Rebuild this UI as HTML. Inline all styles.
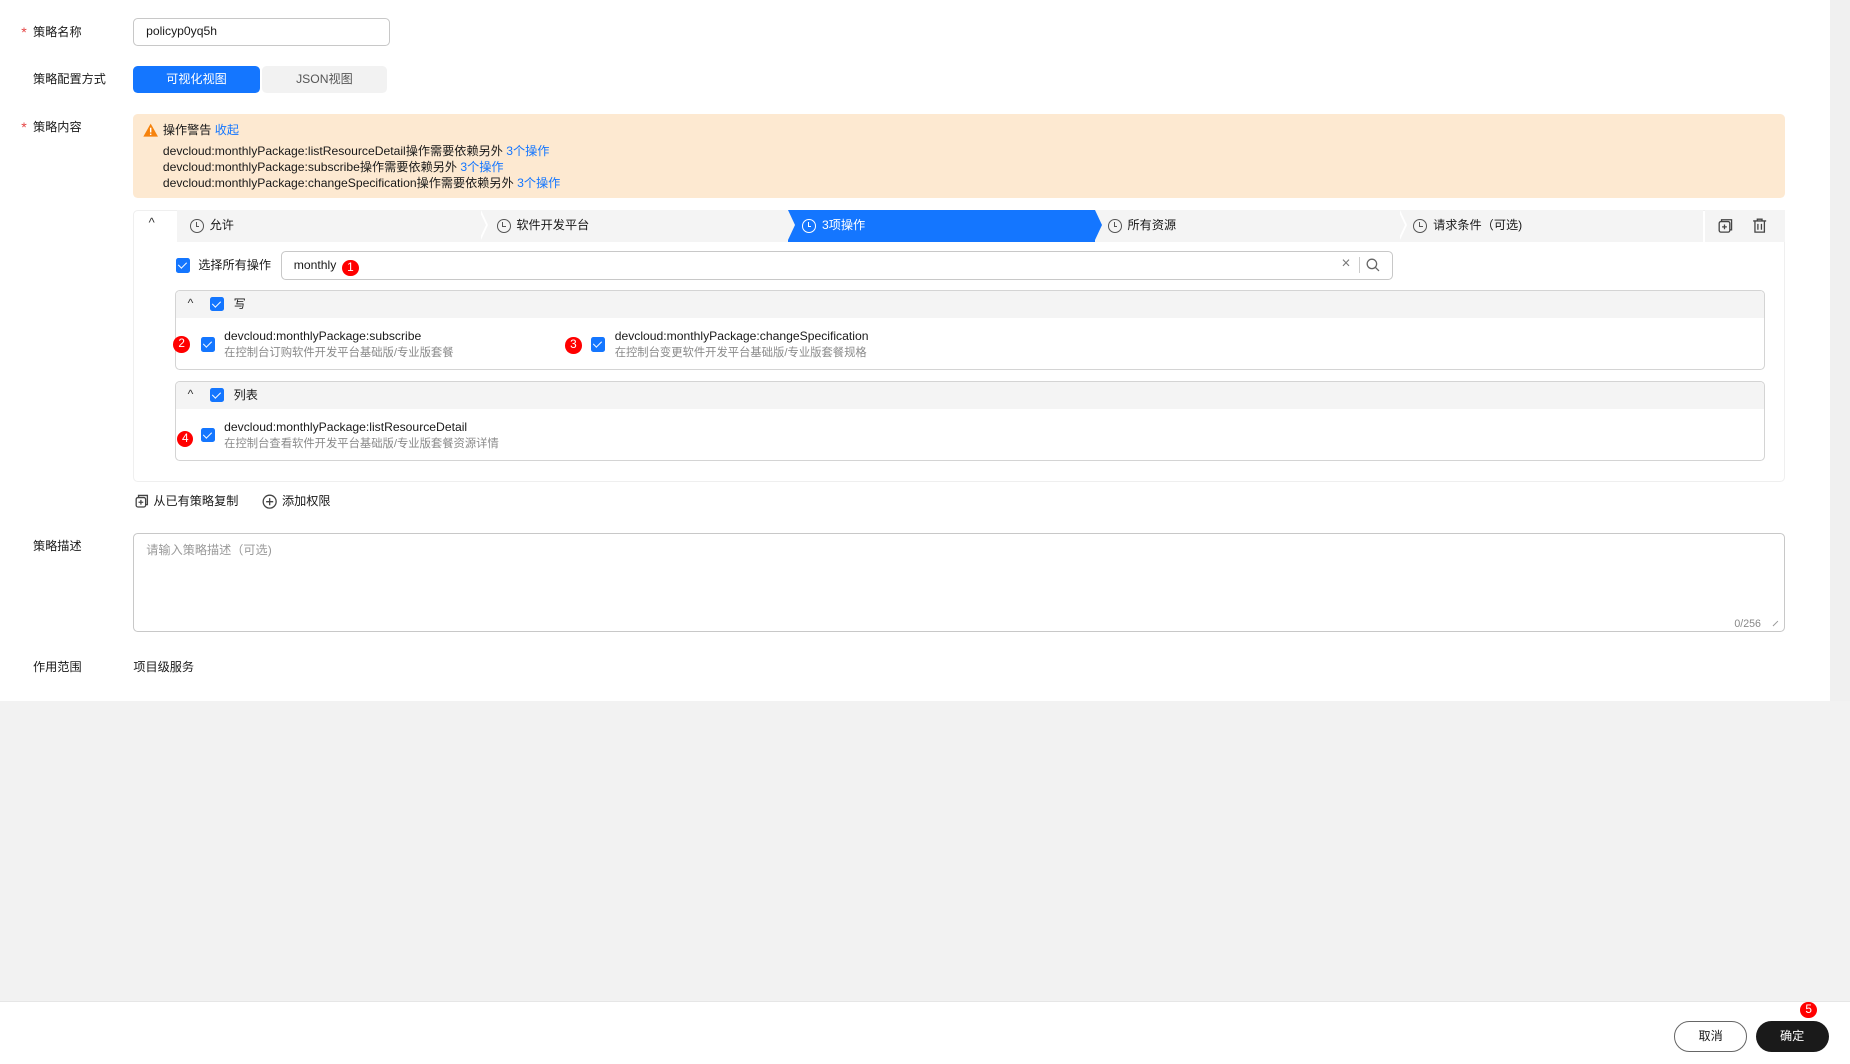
<!DOCTYPE html>
<html><head><meta charset="utf-8"><style>
html,body{margin:0;padding:0;}
body{width:1850px;height:1063px;overflow:hidden;background:#f2f2f2;}
#w{zoom:1.17985;width:1568px;height:901px;position:relative;font-family:"Liberation Sans","Noto Sans CJK SC",sans-serif;font-size:10.3px;line-height:12px;color:#191919;}
.a{position:absolute;}
.lbl{position:absolute;left:28px;color:#191919;}
.st{position:absolute;left:18px;color:#e54545;font-size:12px;}
.cb{position:absolute;width:12px;height:12px;background:#1476ff;border-radius:2px;}
.cb:after{content:"";position:absolute;left:3.5px;top:1.5px;width:3px;height:6px;border:solid #fff;border-width:0 1.5px 1.5px 0;transform:rotate(45deg);}
.badge{position:absolute;width:14px;height:14px;border-radius:50%;background:#f00;color:#fff;font-size:10px;line-height:14px;text-align:center;}
.blue{color:#1476ff}
.step{position:absolute;top:178px;height:27px;background:#f4f4f4;line-height:27px;}
.clk{display:inline-block;width:10px;height:10px;border:1.2px solid #555;border-radius:50%;vertical-align:-3px;margin-right:5px;position:relative}
.clk:after{content:"";position:absolute;left:4px;top:1.5px;width:2px;height:3.5px;border:solid #555;border-width:0 0 1.2px 1.2px}
.clk.w{border-color:#fff}.clk.w:after{border-color:#fff}
.sep{position:absolute;top:178px;width:0;height:0;border-top:13.5px solid transparent;border-bottom:13.5px solid transparent;}
.t2{font-size:9.6px;color:#8a8a8a;}
</style></head><body><div id="w">
<div class="a" style="left:0;top:0;width:1551px;height:594px;background:#fff"></div>
<div class="a" style="left:1551px;top:0;width:17px;height:594px;background:#f0f0f0"></div>
<div class="a" style="left:0;top:848px;width:1568px;height:53px;background:#fff;border-top:1px solid #e6e6e6"></div>

<span class="st" style="top:21px">*</span><span class="lbl" style="top:21px">策略名称</span>
<div class="a" style="left:113px;top:15px;width:206px;height:22px;border:1px solid #c8c8c8;border-radius:4px;line-height:22px;padding-left:10px">policyp0yq5h</div>

<span class="lbl" style="top:61px">策略配置方式</span>
<div class="a" style="left:113px;top:56px;width:107px;height:23px;background:#1476ff;border-radius:4px;color:#fff;text-align:center;line-height:23px">可视化视图</div>
<div class="a" style="left:222px;top:56px;width:106px;height:23px;background:#f2f2f2;border-radius:4px;color:#555;text-align:center;line-height:23px">JSON视图</div>

<span class="st" style="top:102px">*</span><span class="lbl" style="top:102px">策略内容</span>
<div class="a" style="left:113px;top:97px;width:1400px;height:71px;background:#fde9d1;border-radius:4px"></div>
<svg class="a" style="left:121px;top:104px" width="13" height="12"><path d="M6.5 0.5L12.7 11.5H0.3Z" fill="#f6820c"/><rect x="5.9" y="4" width="1.2" height="4" fill="#fff"/><rect x="5.9" y="9" width="1.2" height="1.2" fill="#fff"/></svg>
<div class="a" style="left:138px;top:104px;line-height:13px">操作警告 <span class="blue">收起</span></div>
<div class="a" style="left:138px;top:121px;line-height:13.7px">devcloud:monthlyPackage:listResourceDetail操作需要依赖另外 <span class="blue">3个操作</span><br>devcloud:monthlyPackage:subscribe操作需要依赖另外 <span class="blue">3个操作</span><br>devcloud:monthlyPackage:changeSpecification操作需要依赖另外 <span class="blue">3个操作</span></div>

<div class="a" style="left:113px;top:178px;width:1398px;height:229px;border:1px solid #efefef;border-radius:4px"></div>
<div class="a" style="left:126px;top:183px;font-size:11px;color:#333">^</div>
<div class="step" style="left:150px;width:260px"><span style="margin-left:11px"><i class="clk"></i>允许</span></div>
<div class="step" style="left:410px;width:258px"><span style="margin-left:11px"><i class="clk"></i>软件开发平台</span></div>
<div class="step" style="left:668px;width:260px;background:#1476ff;color:#fff"><span style="margin-left:12px"><i class="clk w"></i>3项操作</span></div>
<div class="step" style="left:928px;width:259px"><span style="margin-left:11px"><i class="clk"></i>所有资源</span></div>
<div class="step" style="left:1187px;width:256px"><span style="margin-left:11px"><i class="clk"></i>请求条件（可选)</span></div>
<div class="step" style="left:1445px;width:68px"></div>
<div class="sep" style="left:408px;border-left:6px solid #fff"></div><div class="sep" style="left:406px;border-left:6px solid #f4f4f4"></div>
<div class="sep" style="left:668px;border-left:6px solid #f4f4f4"></div>
<div class="sep" style="left:928px;border-left:6px solid #1476ff"></div>
<div class="sep" style="left:1187px;border-left:6px solid #fff"></div><div class="sep" style="left:1185px;border-left:6px solid #f4f4f4"></div>
<svg class="a" style="left:1456px;top:185px" width="13" height="13" fill="none" stroke="#444" stroke-width="1.1"><rect x="1" y="3" width="9" height="9" rx="1.5"/><path d="M3 3V1.5h8.5V10H10M5.5 5.5v4M3.5 7.5h4"/></svg>
<svg class="a" style="left:1485px;top:185px" width="13" height="13" fill="none" stroke="#444" stroke-width="1.1"><path d="M1 2.5h11M4.5 2.5V1h4v1.5M2.5 2.5v9.5h8V2.5M5 5v5M8 5v5"/></svg>

<div class="cb" style="left:149px;top:219px"></div>
<div class="a" style="left:168px;top:219px">选择所有操作</div>
<div class="a" style="left:238px;top:213px;width:941px;height:23px;border:1px solid #c8c8c8;border-radius:4px"></div>
<div class="a" style="left:249px;top:219px">monthly</div>
<div class="badge" style="left:290px;top:220px">1</div>
<div class="a" style="left:1137px;top:218px;color:#777;font-size:13px">×</div>
<div class="a" style="left:1152px;top:218px;width:1px;height:13px;background:#ccc"></div>
<svg class="a" style="left:1158px;top:219px" width="12" height="12" fill="none" stroke="#666" stroke-width="1.1"><circle cx="5" cy="5" r="4"/><path d="M8 8l3 3"/></svg>

<div class="a" style="left:148px;top:246px;width:1346px;height:66px;border:1px solid #d4d4d4;border-radius:4px;overflow:hidden"><div style="height:23px;background:#f4f4f4"></div></div>
<div class="a" style="left:159px;top:251px;color:#333">^</div>
<div class="cb" style="left:178px;top:252px"></div><div class="a" style="left:198px;top:252px">写</div>
<div class="badge" style="left:147px;top:285px">2</div>
<div class="cb" style="left:170px;top:286px"></div>
<div class="a" style="left:190px;top:279px">devcloud:monthlyPackage:subscribe</div>
<div class="a t2" style="left:190px;top:293px">在控制台订购软件开发平台基础版/专业版套餐</div>
<div class="badge" style="left:479px;top:286px">3</div>
<div class="cb" style="left:501px;top:286px"></div>
<div class="a" style="left:521px;top:279px">devcloud:monthlyPackage:changeSpecification</div>
<div class="a t2" style="left:521px;top:293px">在控制台变更软件开发平台基础版/专业版套餐规格</div>

<div class="a" style="left:148px;top:323px;width:1346px;height:66px;border:1px solid #d4d4d4;border-radius:4px;overflow:hidden"><div style="height:23px;background:#f4f4f4"></div></div>
<div class="a" style="left:159px;top:328px;color:#333">^</div>
<div class="cb" style="left:178px;top:329px"></div><div class="a" style="left:198px;top:329px">列表</div>
<div class="badge" style="left:150px;top:365px">4</div>
<div class="cb" style="left:170px;top:363px"></div>
<div class="a" style="left:190px;top:356px">devcloud:monthlyPackage:listResourceDetail</div>
<div class="a t2" style="left:190px;top:370px">在控制台查看软件开发平台基础版/专业版套餐资源详情</div>

<svg class="a" style="left:114px;top:419px" width="12" height="12" fill="none" stroke="#444" stroke-width="1.1"><rect x="1" y="3" width="8" height="8" rx="1.5"/><path d="M3 3V1.2h7.5V9H9M5 5v4M3 7h4"/></svg>
<div class="a" style="left:130px;top:419px">从已有策略复制</div>
<svg class="a" style="left:222px;top:419px" width="13" height="13" fill="none" stroke="#444" stroke-width="1.1"><circle cx="6.5" cy="6.5" r="5.5"/><path d="M6.5 3.5v6M3.5 6.5h6"/></svg>
<div class="a" style="left:239px;top:419px">添加权限</div>

<span class="lbl" style="top:457px">策略描述</span>
<div class="a" style="left:113px;top:452px;width:1398px;height:82px;border:1px solid #c8c8c8;border-radius:4px"></div>
<div class="a" style="left:124px;top:460px;color:#999">请输入策略描述（可选)</div>
<div class="a" style="left:1470px;top:523px;color:#888;font-size:9px">0/256</div>
<div class="a" style="left:1502px;top:528px;width:6px;height:1px;background:#999;transform:rotate(-45deg)"></div>

<span class="lbl" style="top:559px">作用范围</span>
<div class="a" style="left:113px;top:559px">项目级服务</div>

<div class="a" style="left:1419px;top:865px;width:60px;height:25px;border:1px solid #666;border-radius:13px;text-align:center;line-height:25px">取消</div>
<div class="a" style="left:1488px;top:865px;width:62px;height:27px;background:#1a1a1a;border-radius:14px;color:#fff;text-align:center;line-height:27px">确定</div>
<div class="badge" style="left:1526px;top:849px">5</div>
</div></body></html>
